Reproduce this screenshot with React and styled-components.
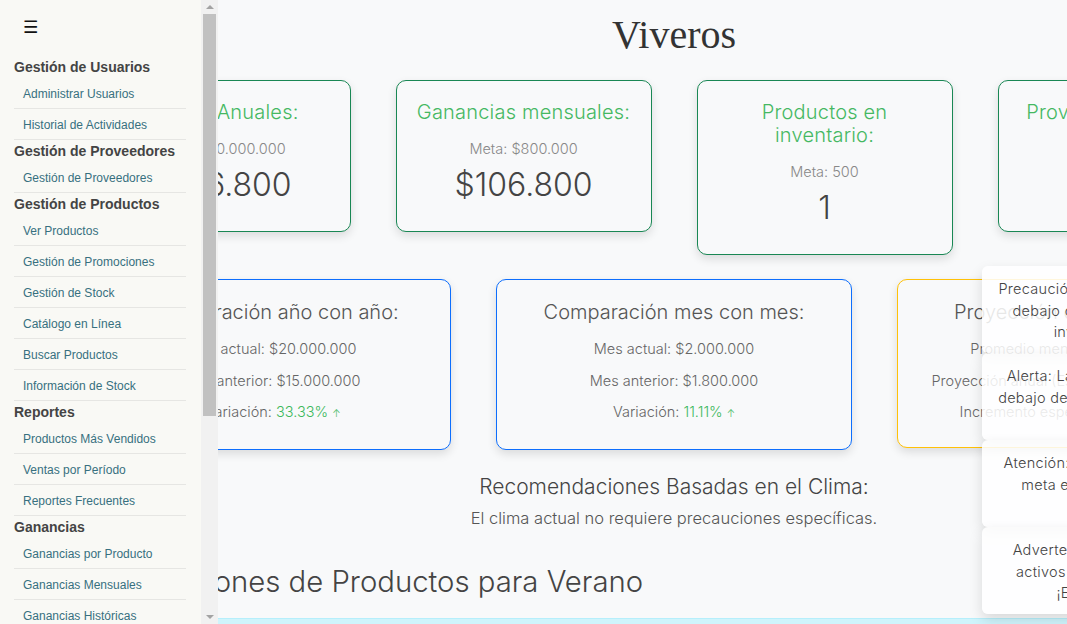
import React from "react";
import styled, { createGlobalStyle } from "styled-components";

const GlobalStyle = createGlobalStyle`
  body {
    margin: 0;
    background: #f8f9fa;
    overflow: hidden;
    font-family: Inter, "Open Sans", sans-serif;
    color: #444;
  }
`;

const sections = [
  { title: "Gestión de Usuarios", links: ["Administrar Usuarios", "Historial de Actividades"] },
  { title: "Gestión de Proveedores", links: ["Gestión de Proveedores"] },
  {
    title: "Gestión de Productos",
    links: ["Ver Productos", "Gestión de Promociones", "Gestión de Stock", "Catálogo en Línea", "Buscar Productos", "Información de Stock"],
  },
  { title: "Reportes", links: ["Productos Más Vendidos", "Ventas por Período", "Reportes Frecuentes"] },
  { title: "Ganancias", links: ["Ganancias por Producto", "Ganancias Mensuales", "Ganancias Históricas"] },
  { title: "Pedidos", links: ["Ver Pedidos", "Pedidos Pendientes", "Historial de Pedidos"] },
  { title: "Clientes", links: ["Ver Clientes", "Clientes Frecuentes"] },
  { title: "Configuración", links: ["Ajustes Generales", "Cerrar Sesión"] },
];

const topCards = [
  { title: "Ventas Anuales:", meta: "Meta: $10.000.000", value: "$106.800" },
  { title: "Ganancias mensuales:", meta: "Meta: $800.000", value: "$106.800" },
  { title: "Productos en inventario:", meta: "Meta: 500", value: "1" },
  { title: "Proveedores activos:", meta: "Meta: 20", value: "3" },
];

const toasts = [
  "Precaución: Las ganancias anuales están por debajo de la meta establecida. Revise las inversiones del presente año.",
  "Alerta: Las ganancias mensuales están por debajo de la meta establecida para este mes.",
  "Atención: El stock de productos está bajo la meta en varios artículos del inventario.",
  "Advertencia: La cantidad de proveedores activos es inferior a la meta establecida. ¡Explore nuevas alternativas!",
];

const Page = styled.div`
  position: relative;
  width: 1348px;
  min-height: 624px;
`;

const Sidebar = styled.nav`
  position: fixed;
  top: 0;
  left: 0;
  bottom: 0;
  display: flex;
  background: #f9f9f5;
  z-index: 10;
  font-family: "Liberation Sans", Arial, sans-serif;
`;

const SideContent = styled.div`
  width: 201px;
  box-sizing: border-box;
  padding: 0 15px 0 14px;
  overflow: hidden;
`;

// fake classic scrollbar (headless browser hides the native one)
const ScrollTrack = styled.div`
  width: 17px;
  display: flex;
  flex-direction: column;
  align-items: center;
  background: #f1f1f1;
`;

const ScrollArrow = styled.div`
  height: 14px;
  flex: 0 0 14px;
  display: flex;
  align-items: center;
  justify-content: center;

  &::before {
    content: "";
    border-left: 4px solid transparent;
    border-right: 4px solid transparent;
    ${(p) => (p.down ? "border-top: 4px solid #a3a3a3;" : "border-bottom: 4px solid #a3a3a3;")}
  }
`;

const ScrollThumb = styled.div`
  width: 13px;
  height: 402px;
  background: #c1c1c1;
`;

const Spacer = styled.div`
  flex: 1;
`;

const SideTop = styled.div`
  height: 56px;
  display: flex;
  align-items: center;
  padding-left: 6px;
  padding-bottom: 2px;
  box-sizing: border-box;
`;

const Burger = styled.button`
  border: none;
  background: none;
  font-size: 17px;
  color: #111;
  padding: 0 3px;
  cursor: pointer;
  font-family: "DejaVu Sans", sans-serif;
`;

const SectionTitle = styled.div`
  height: 22px;
  line-height: 22px;
  font-size: 14px;
  font-weight: bold;
  color: #444;
  white-space: nowrap;
`;

const SideLink = styled.a`
  display: block;
  height: 28px;
  padding: 2px 0 0 9px;
  line-height: 28px;
  font-size: 12px;
  color: #37707f;
  text-decoration: none;
  border-bottom: 1px solid #e6e6e3;
  white-space: nowrap;
`;

const Main = styled.main`
  display: flex;
  flex-direction: column;
  align-items: center;
`;

const Title = styled.h1`
  margin: 11px 0 21px;
  font-family: "Liberation Serif", "Times New Roman", serif;
  font-weight: normal;
  font-size: 40px;
  line-height: 48px;
  color: #333;
`;

const Row = styled.div`
  display: flex;
  gap: 45px;
  align-items: flex-start;
  margin-bottom: ${(p) => p.mb || 0}px;
`;

const Card = styled.div`
  width: ${(p) => p.w}px;
  box-sizing: border-box;
  border: 1px solid ${(p) => p.border};
  border-radius: 10px;
  background: #f8f9fa;
  box-shadow: 0 4px 10px rgba(0, 0, 0, 0.12);
  text-align: center;
  padding: ${(p) => p.pad};
`;

const CardTitle = styled.div`
  font-size: 20px;
  line-height: 23px;
  font-weight: 300;
  letter-spacing: 0.2px;
  color: #45b862;
  margin-bottom: 14px;
`;

const Meta = styled.div`
  font-size: 14.5px;
  line-height: 22px;
  font-weight: 300;
  color: #888;
  margin-bottom: 6px;
`;

const Value = styled.div`
  font-size: 32px;
  line-height: 38px;
  font-weight: 300;
  color: #444;
`;

const CompTitle = styled.div`
  font-size: 20px;
  line-height: 24px;
  font-weight: 300;
  color: #555;
  margin-bottom: 9px;
`;

const CompLine = styled.div`
  font-size: 14.5px;
  line-height: 31.5px;
  font-weight: 300;
  color: #666;
  white-space: nowrap;
`;

const Up = styled.span`
  color: #3cb85c;
`;

const Arrow = styled.span`
  font-size: 10px;
  margin-left: 4px;
`;

const ClimaTitle = styled.div`
  font-size: 21px;
  line-height: 24px;
  font-weight: 300;
  color: #444;
  margin-bottom: 8px;
`;

const ClimaText = styled.div`
  font-size: 16.5px;
  line-height: 22px;
  font-weight: 300;
  color: #555;
`;

const Section = styled.section`
  align-self: stretch;
  padding-left: 28px;
  margin-top: 36px;
`;

const SectionHeading = styled.h2`
  margin: 0 0 19px;
  font-size: 29.3px;
  line-height: 34px;
  font-weight: 300;
  color: #444;
`;

const InfoBox = styled.div`
  height: 120px;
  margin-right: 36px;
  background: #cff4fc;
  border: 1px solid #b6effb;
  border-radius: 6px;
`;

const ToastStack = styled.div`
  position: absolute;
  top: 266px;
  left: 982px;
  width: 350px;
  z-index: 5;
`;

const Toast = styled.div`
  box-sizing: border-box;
  height: 87px;
  padding: 12px;
  background: rgba(255, 255, 255, 0.86);
  border-radius: 6px;
  box-shadow: 0 6px 14px rgba(0, 0, 0, 0.13);
  text-align: center;
  font-size: 14.5px;
  letter-spacing: 0.3px;
  line-height: 21.5px;
  font-weight: 300;
  color: #444;
`;

export default function App() {
  return (
    <Page>
      <GlobalStyle />
      <Sidebar>
        <SideContent>
          <SideTop>
            <Burger>☰</Burger>
          </SideTop>
          {sections.map((s) => (
            <div key={s.title}>
              <SectionTitle>{s.title}</SectionTitle>
              {s.links.map((l) => (
                <SideLink key={l} href="#">
                  {l}
                </SideLink>
              ))}
            </div>
          ))}
        </SideContent>
        <ScrollTrack>
          <ScrollArrow />
          <ScrollThumb />
          <Spacer />
          <ScrollArrow down />
        </ScrollTrack>
      </Sidebar>

      <Main>
        <Title>Viveros</Title>
        <Row mb={24}>
          {topCards.map((c) => (
            <Card key={c.title} w={256} border="#198754" pad="20px 16px 27px">
              <CardTitle>{c.title}</CardTitle>
              <Meta>{c.meta}</Meta>
              <Value>{c.value}</Value>
            </Card>
          ))}
        </Row>
        <Row mb={25}>
          <Card w={356} border="#0d6efd" pad="20px 16px 19px">
            <CompTitle>Comparación año con año:</CompTitle>
            <CompLine>Año actual: $20.000.000</CompLine>
            <CompLine>Año anterior: $15.000.000</CompLine>
            <CompLine>
              Variación: <Up>33.33%<Arrow>↑</Arrow></Up>
            </CompLine>
          </Card>
          <Card w={356} border="#0d6efd" pad="20px 16px 19px">
            <CompTitle>Comparación mes con mes:</CompTitle>
            <CompLine>Mes actual: $2.000.000</CompLine>
            <CompLine>Mes anterior: $1.800.000</CompLine>
            <CompLine>
              Variación: <Up>11.11%<Arrow>↑</Arrow></Up>
            </CompLine>
          </Card>
          <Card w={356} border="#ffc107" pad="20px 16px 19px">
            <CompTitle>Proyección de Ganancias:</CompTitle>
            <CompLine>Promedio mensual: $1.900.000</CompLine>
            <CompLine>Proyección anual (Estimada): $22.800.000</CompLine>
            <CompLine>Incremento esperado: $2.800.000</CompLine>
          </Card>
        </Row>
        <ClimaTitle>Recomendaciones Basadas en el Clima:</ClimaTitle>
        <ClimaText>El clima actual no requiere precauciones específicas.</ClimaText>
        <Section>
          <SectionHeading>Recomendaciones de Productos para Verano</SectionHeading>
          <InfoBox />
        </Section>
      </Main>

      <ToastStack>
        {toasts.map((t) => (
          <Toast key={t}>{t}</Toast>
        ))}
      </ToastStack>
    </Page>
  );
}
